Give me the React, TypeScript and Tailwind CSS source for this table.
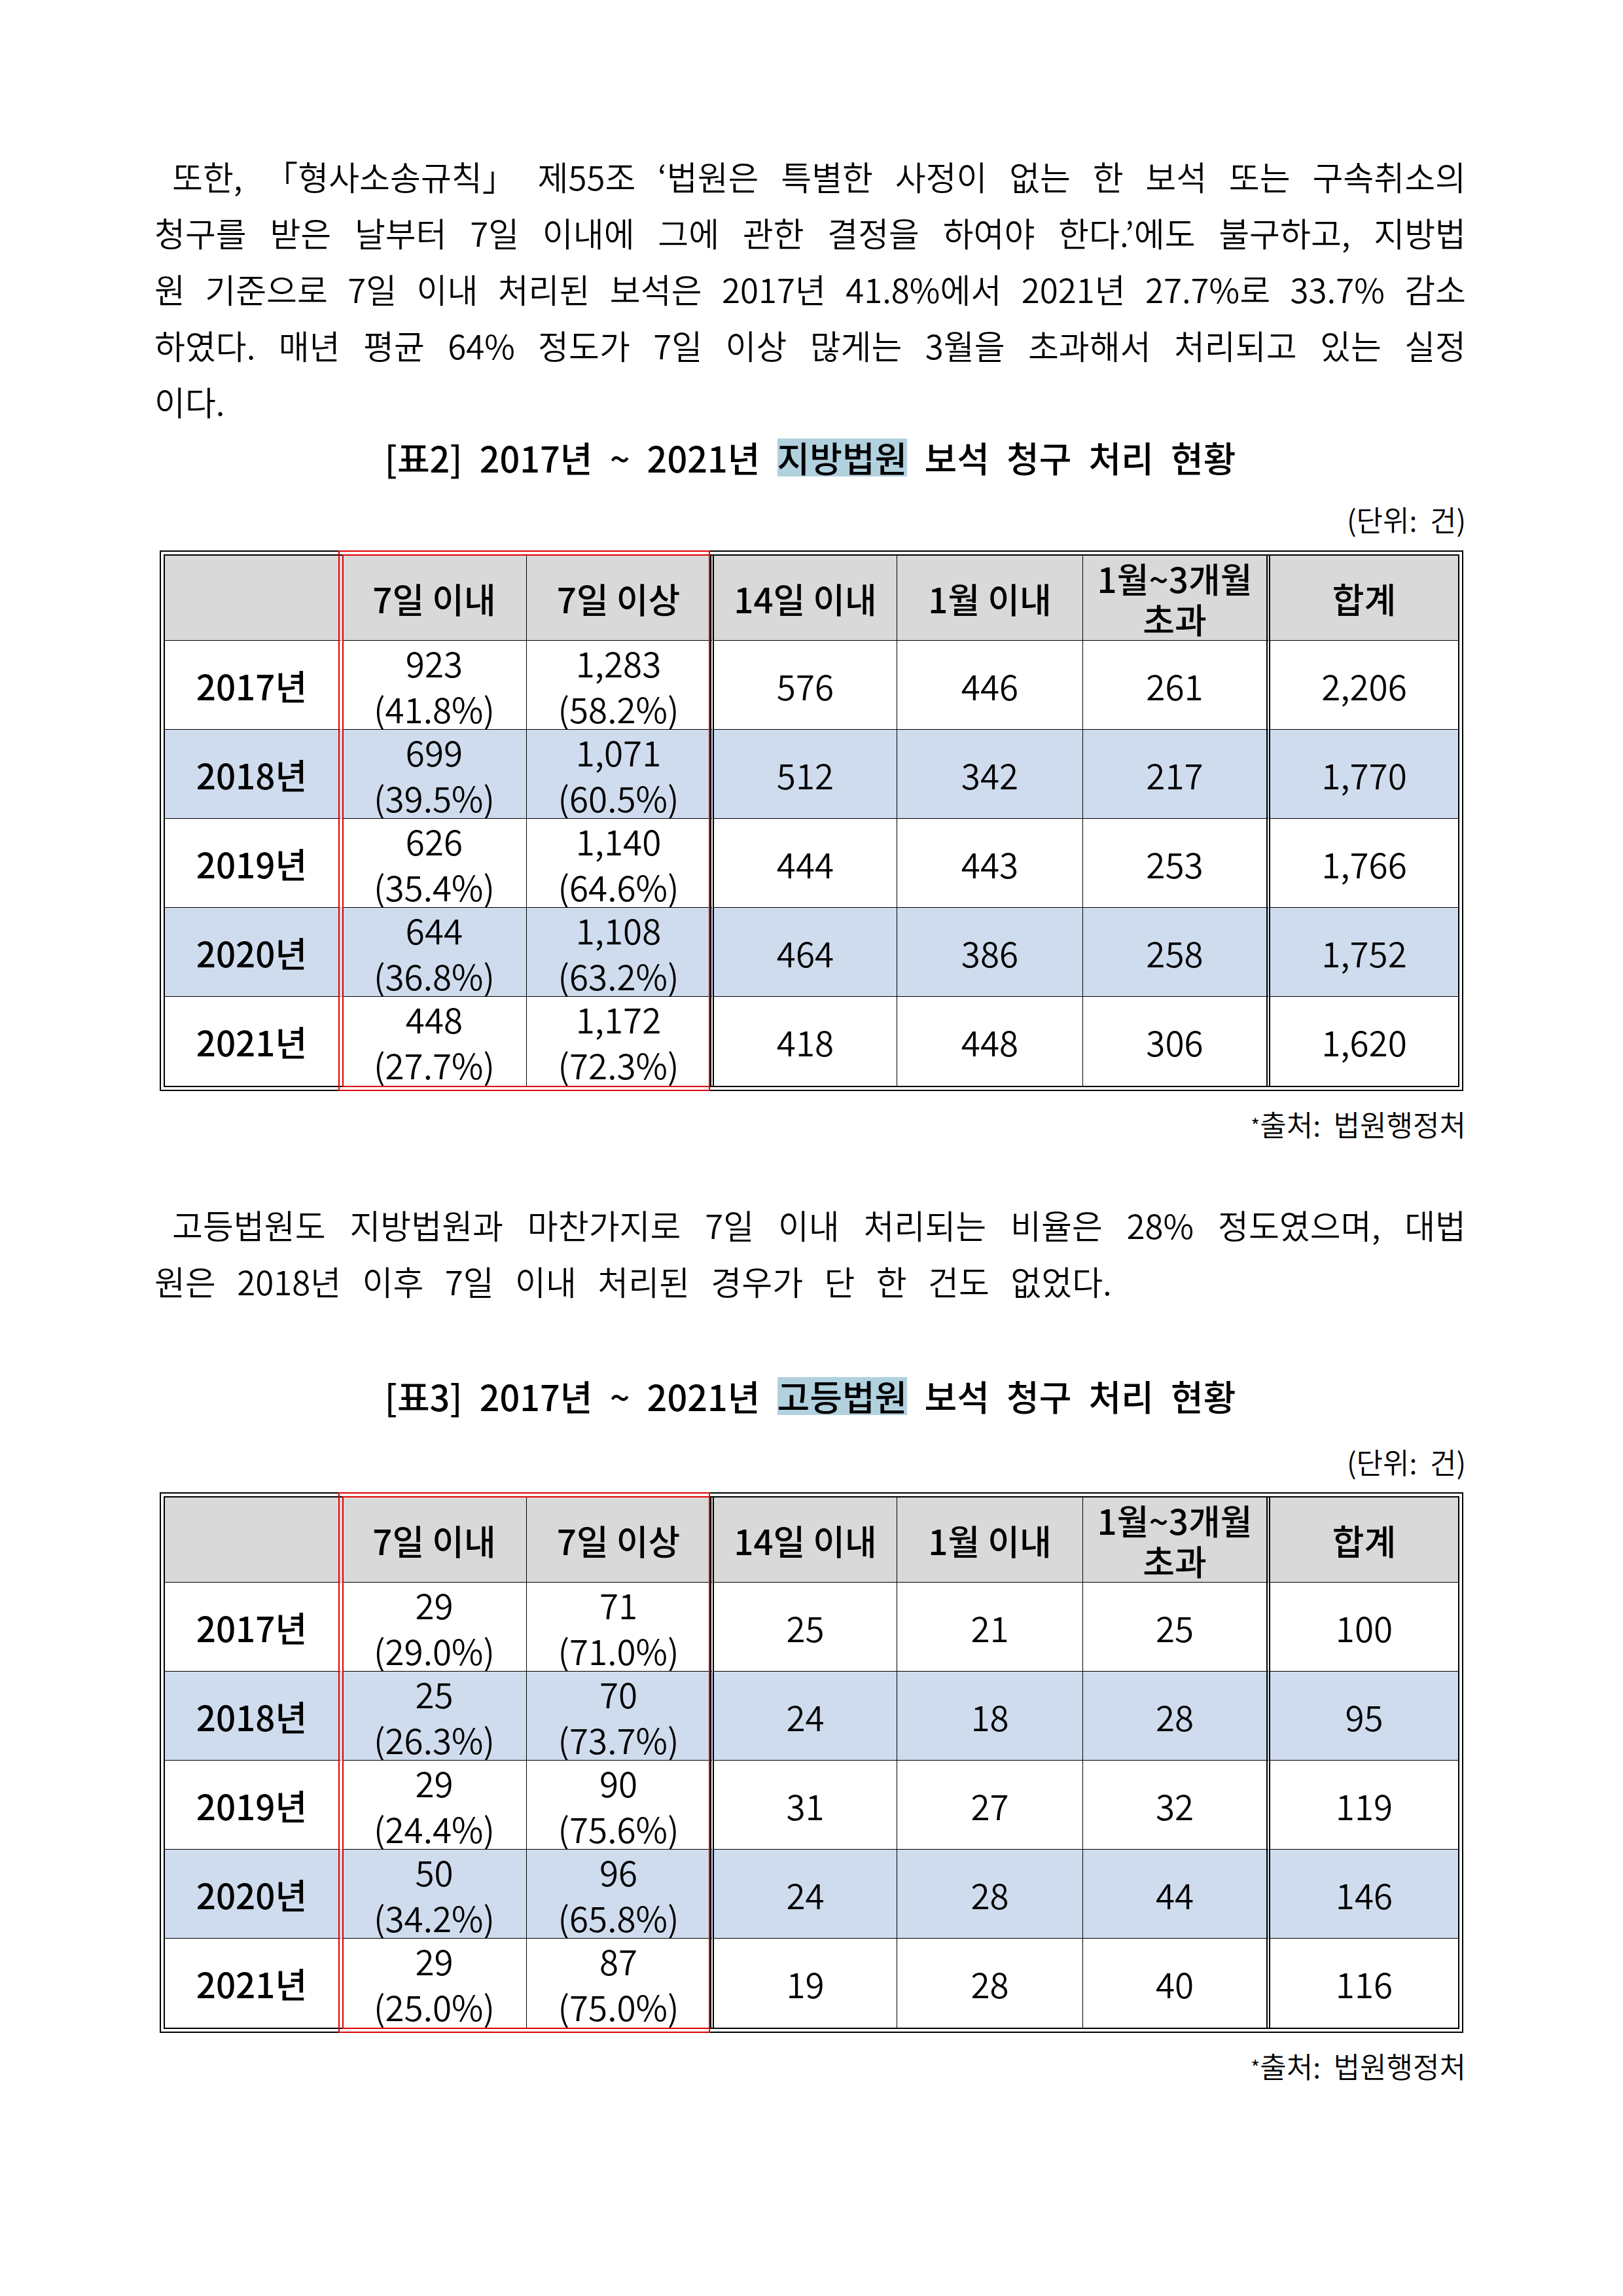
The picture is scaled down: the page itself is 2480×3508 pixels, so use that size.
type Row = {
  year: string;
  a: string;
  ap: string;
  b: string;
  bp: string;
  c: string;
  d: string;
  e: string;
  total: string;
};

const districtRows: Row[] = [
  { year: "2017년", a: "923", ap: "(41.8%)", b: "1,283", bp: "(58.2%)", c: "576", d: "446", e: "261", total: "2,206" },
  { year: "2018년", a: "699", ap: "(39.5%)", b: "1,071", bp: "(60.5%)", c: "512", d: "342", e: "217", total: "1,770" },
  { year: "2019년", a: "626", ap: "(35.4%)", b: "1,140", bp: "(64.6%)", c: "444", d: "443", e: "253", total: "1,766" },
  { year: "2020년", a: "644", ap: "(36.8%)", b: "1,108", bp: "(63.2%)", c: "464", d: "386", e: "258", total: "1,752" },
  { year: "2021년", a: "448", ap: "(27.7%)", b: "1,172", bp: "(72.3%)", c: "418", d: "448", e: "306", total: "1,620" },
];

const highRows: Row[] = [
  { year: "2017년", a: "29", ap: "(29.0%)", b: "71", bp: "(71.0%)", c: "25", d: "21", e: "25", total: "100" },
  { year: "2018년", a: "25", ap: "(26.3%)", b: "70", bp: "(73.7%)", c: "24", d: "18", e: "28", total: "95" },
  { year: "2019년", a: "29", ap: "(24.4%)", b: "90", bp: "(75.6%)", c: "31", d: "27", e: "32", total: "119" },
  { year: "2020년", a: "50", ap: "(34.2%)", b: "96", bp: "(65.8%)", c: "24", d: "28", e: "44", total: "146" },
  { year: "2021년", a: "29", ap: "(25.0%)", b: "87", bp: "(75.0%)", c: "19", d: "28", e: "40", total: "116" },
];

// right-hand border of each column
const colBorder = [
  "border-r-[6px] border-r-transparent",
  "border-r border-r-black",
  "border-r-[6px] border-double border-r-black",
  "border-r border-r-black",
  "border-r border-r-black",
  "border-r-[6px] border-double border-r-black",
  "",
];

function Cell({ col, bg, last, bold, children }: { col: number; bg: string; last?: boolean; bold?: boolean; children: React.ReactNode }) {
  return (
    <div
      className={`flex flex-col items-center justify-center text-center ${colBorder[col]} ${last ? "" : "border-b border-b-black"} ${bg} ${bold ? "font-medium" : "font-[350]"}`}
    >
      {children}
    </div>
  );
}

function StatTable({ rows }: { rows: Row[] }) {
  return (
    <div className="relative ml-[8px] w-[1992px] border-2 border-black p-[4px]">
      <div className="border-2 border-black">
        <div className="grid grid-cols-[271px_282px_286px_280px_284px_286px_287px] auto-rows-[136px] grid-rows-[130px] text-[53px] leading-[70px]">
          <Cell col={0} bg="bg-[#d9d9d9]" bold>{""}</Cell>
          <Cell col={1} bg="bg-[#d9d9d9]" bold>7일 이내</Cell>
          <Cell col={2} bg="bg-[#d9d9d9]" bold>7일 이상</Cell>
          <Cell col={3} bg="bg-[#d9d9d9]" bold>14일 이내</Cell>
          <Cell col={4} bg="bg-[#d9d9d9]" bold>1월 이내</Cell>
          <Cell col={5} bg="bg-[#d9d9d9]" bold>
            <span className="leading-[62px]">1월~3개월</span>
            <span className="leading-[62px]">초과</span>
          </Cell>
          <Cell col={6} bg="bg-[#d9d9d9]" bold>합계</Cell>
          {rows.map((r, i) => {
            const bg = i % 2 === 1 ? "bg-[#cfdcee]" : "bg-white";
            const last = i === rows.length - 1;
            return [
              <Cell key={`${i}-0`} col={0} bg={bg} last={last} bold>{r.year}</Cell>,
              <Cell key={`${i}-1`} col={1} bg={bg} last={last}>
                <span>{r.a}</span>
                <span>{r.ap}</span>
              </Cell>,
              <Cell key={`${i}-2`} col={2} bg={bg} last={last}>
                <span>{r.b}</span>
                <span>{r.bp}</span>
              </Cell>,
              <Cell key={`${i}-3`} col={3} bg={bg} last={last}>{r.c}</Cell>,
              <Cell key={`${i}-4`} col={4} bg={bg} last={last}>{r.d}</Cell>,
              <Cell key={`${i}-5`} col={5} bg={bg} last={last}>{r.e}</Cell>,
              <Cell key={`${i}-6`} col={6} bg={bg} last={last}>{r.total}</Cell>,
            ];
          })}
        </div>
      </div>
      {/* red double box over the 7일 columns */}
      <div className="pointer-events-none absolute top-[-2px] bottom-[-2px] left-[271px] w-[568px] border-2 border-[#e00000]" />
      <div className="pointer-events-none absolute top-[4px] bottom-[4px] left-[277px] w-[562px] border-2 border-[#e00000]" />
    </div>
  );
}

function Line({ children, first }: { children: React.ReactNode; first?: boolean }) {
  return (
    <div className={`text-justify [text-align-last:justify] [text-justify:inter-word] ${first ? "pl-[27px]" : ""}`}>
      {children}
    </div>
  );
}

function Title({ num, court }: { num: string; court: string }) {
  return (
    <div className="text-center text-[54px] leading-[86px] font-medium [word-spacing:14px]">
      [표{num}] 2017년 ~ 2021년{" "}
      <span className="inline-block h-[58px] bg-[#b2d1df] leading-[58px]">{court}</span> 보석 청구 처리 현황
    </div>
  );
}

function Source() {
  return (
    <div className="text-right text-[44px] leading-[60px] font-[350] whitespace-pre">
      <span className="relative top-[-4px] text-[30px]">*</span>출처:  법원행정처
    </div>
  );
}

export default function App() {
  return (
    <div className="min-h-[3508px] w-[2480px] bg-white font-['Noto_Sans_CJK_KR',sans-serif] text-black">
      <div className="w-[2004px] ml-[236px] pt-[226px]">
        <div className="text-[51px] leading-[86px] font-[350]">
          <Line first>
            또한, <span className="inline-block">「형사소송규칙」</span> 제55조 ‘법원은 특별한 사정이 없는 한 보석 또는 구속취소의
          </Line>
          <Line>청구를 받은 날부터 7일 이내에 그에 관한 결정을 하여야 한다.’에도 불구하고, 지방법</Line>
          <Line>원 기준으로 7일 이내 처리된 보석은 2017년 41.8%에서 2021년 27.7%로 33.7% 감소</Line>
          <Line>하였다. 매년 평균 64% 정도가 7일 이상 많게는 3월을 초과해서 처리되고 있는 실정</Line>
          <div>이다.</div>
        </div>

        <Title num="2" court="지방법원" />
        <div className="mt-[21px] text-right text-[44px] leading-[60px] font-[350] whitespace-pre">(단위:  건)</div>
        <div className="mt-[18px]">
          <StatTable rows={districtRows} />
        </div>
        <div className="mt-[20px]">
          <Source />
        </div>

        <div className="mt-[75px] text-[51px] leading-[86px] font-[350]">
          <Line first>고등법원도 지방법원과 마찬가지로 7일 이내 처리되는 비율은 28% 정도였으며, 대법</Line>
          <div className="[word-spacing:21px]">원은 2018년 이후 7일 이내 처리된 경우가 단 한 건도 없었다.</div>
        </div>

        <div className="mt-[90px]">
          <Title num="3" court="고등법원" />
        </div>
        <div className="mt-[27px] text-right text-[44px] leading-[60px] font-[350] whitespace-pre">(단위:  건)</div>
        <div className="mt-[17px]">
          <StatTable rows={highRows} />
        </div>
        <div className="mt-[20px]">
          <Source />
        </div>
      </div>
    </div>
  );
}
